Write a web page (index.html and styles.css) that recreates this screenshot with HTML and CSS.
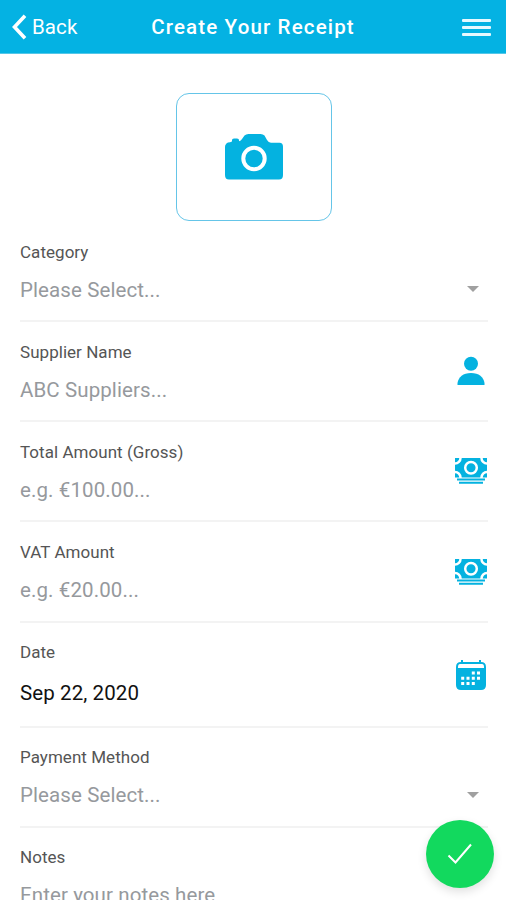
FILE: index.html
```html
<!DOCTYPE html>
<html lang="en">
<head>
<meta charset="utf-8">
<title>Create Your Receipt</title>
<link rel="stylesheet" href="styles.css">
</head>
<body>
<svg width="0" height="0" class="defs">
  <symbol id="cash" viewBox="0 0 34 28">
    <rect x="1" y="1" width="32" height="19.5" fill="#04b2e0"/>
    <g fill="none" stroke="#fff" stroke-width="2.500">
      <circle cx="17" cy="10.8" r="5.8"/>
      <circle cx="1" cy="1" r="5.500"/><circle cx="33" cy="1" r="5.500"/>
      <circle cx="1" cy="20.5" r="5.500"/><circle cx="33" cy="20.5" r="5.500"/>
    </g>
    <path d="M3 21.6h28v1.9H3zM5 24.8h24v2H5z" fill="#04b2e0"/>
  </symbol>
</svg>
<div class="screen">
  <header class="bar">
    <a class="back"><svg width="16" height="28" viewBox="0 0 16 28"><path d="M14 2.800 3.500 14 14 25.200" fill="none" stroke="#fff" stroke-width="3.600" stroke-linecap="butt"/></svg><span>Back</span></a>
    <h1 class="title">Create Your Receipt</h1>
    <div class="menu"><i></i><i></i><i></i></div>
  </header>
  <main class="form">
    <div class="photo">
      <svg width="60" height="48" viewBox="0 0 60 48"><path d="M1 14q0-3 3-4.500 2 0 4-1V7q0-1.500 2-1.500h3q2 0 2 1.500v1.200q2-.2 3-2.200l2.500-3.500Q22 1 24.500 1h12q2.500 0 4 1.500L43 7q1.500 2.700 4 2.700h8.500q3.500 0 3.500 4V42q0 4.500-4 4.500H5Q1 46.500 1 42z" fill="#04b2e0"/><circle cx="30" cy="25.500" r="10.700" fill="none" stroke="#fff" stroke-width="4"/></svg>
    </div>
    <section class="row"><div><div class="label">Category</div><div class="value select">Please Select...</div></div><i class="caret"></i></section>
    <section class="row"><div><div class="label">Supplier Name</div><div class="value supplier">ABC Suppliers...</div></div>
      <svg class="icon" width="34" height="32" viewBox="0 0 34 32"><circle cx="17" cy="8.800" r="7" fill="#04b2e0"/><path d="M3.500 30v-2C4.500 22 9 18 17 18s12.500 4 13.500 10v2z" fill="#04b2e0"/></svg></section>
    <section class="row"><div><div class="label">Total Amount (Gross)</div><div class="value">e.g. €100.00...</div></div><svg class="icon" width="34" height="28"><use href="#cash"/></svg></section>
    <section class="row vat"><div><div class="label">VAT Amount</div><div class="value">e.g. €20.00...</div></div><svg class="icon" width="34" height="28"><use href="#cash"/></svg></section>
    <section class="row date"><div><div class="label">Date</div><div class="value filled">Sep 22, 2020</div></div>
      <svg class="icon" width="34" height="32" viewBox="0 0 34 32"><path d="M7 1h2v2h16V1h2v2q5 0 5 5v18q0 5-5 5H7q-5 0-5-5V8q0-5 5-5z" fill="#04b2e0"/><path d="M6 5h22q2 0 2 3v1H4V8q0-3 2-3z" fill="#fff"/><g fill="#fff"><path d="M17.800 12.500h3v3h-3zM23 12.500h3v3h-3zM7.200 17.700h3v3h-3zM12.500 17.700h3v3h-3zM17.800 17.700h3v3h-3zM23 17.700h3v3h-3zM7.200 22.900h3v3h-3zM12.500 22.900h3v3h-3zM17.800 22.900h3v3h-3z"/></g></svg></section>
    <section class="row late"><div><div class="label">Payment Method</div><div class="value select">Please Select...</div></div><i class="caret"></i></section>
    <section class="row late"><div><div class="label">Notes</div><div class="value">Enter your notes here</div></div></section>
  </main>
  <button class="save" aria-label="Save"><svg width="28" height="24" viewBox="0 0 28 24"><path d="M2.500 13.500 9.500 20.500 25 2.500" fill="none" stroke="#fff" stroke-width="2"/></svg></button>
</div>
</body>
</html>
```
FILE: styles.css
```css
* { box-sizing: border-box; }
body { margin: 0; font-family: Roboto, "Liberation Sans", sans-serif; background: #fff; }
.defs { position: absolute; }
.screen { position: relative; height: 900px; overflow: hidden; }
.bar {
  display: grid;
  grid-template-columns: 120px 1fr 120px;
  align-items: center;
  height: 54px;
  padding: 0 15px 0 11px;
  background: #04b2e3;
  border-bottom: 1px solid #54c7e8;
  color: #fff;
}
.back { display: flex; align-items: center; gap: 5px; font-size: 20.5px; letter-spacing: 0.1px; }
.title { margin: 0; padding-left: 4px; text-align: center; font-size: 20.5px; font-weight: 500; letter-spacing: 1.15px; white-space: nowrap; }
.menu { display: grid; gap: 4px; width: 29px; justify-self: end; padding-top: 2px; }
.menu i { height: 3px; border-radius: 1px; background: #e6f9ff; }
.form { padding: 39px 18px 0 20px; }
.photo {
  display: flex;
  align-items: center;
  justify-content: center;
  width: 156px;
  height: 128px;
  margin: 0 auto 1px 155.5px;
  border: 1.5px solid #65c5e8;
  border-radius: 13px;
}
.photo svg { margin-left: 1px; }
.row {
  display: flex;
  justify-content: space-between;
  align-items: center;
  height: 100px;
  border-bottom: 2px solid #f3f3f3;
}
.row > div { align-self: flex-start; padding-top: 20px; }
.vat { height: 101px; }
.date { height: 105px; }
.date > div, .late > div { padding-top: 19px; }
.label { font-size: 17px; line-height: 20px; color: #555; letter-spacing: 0.04px; }
.value { margin-top: 14px; font-size: 20.5px; line-height: 28px; color: #96999d; letter-spacing: 0.1px; white-space: nowrap; }
.date .value { margin-top: 17px; }
.date .filled { color: #111; }
.caret { margin: 36px 9px 0 0; border: 6px solid transparent; border-top-color: #a0a0a0; border-bottom: 0; }
.late .caret { margin-top: 35px; }
.save {
  position: absolute;
  left: 426px;
  top: 820px;
  display: flex;
  align-items: center;
  justify-content: center;
  width: 68px;
  height: 68px;
  padding: 0;
  border: 0;
  border-radius: 50%;
  background: #12d95e;
  box-shadow: 0 4px 10px rgba(0, 0, 0, 0.12);
}
```
